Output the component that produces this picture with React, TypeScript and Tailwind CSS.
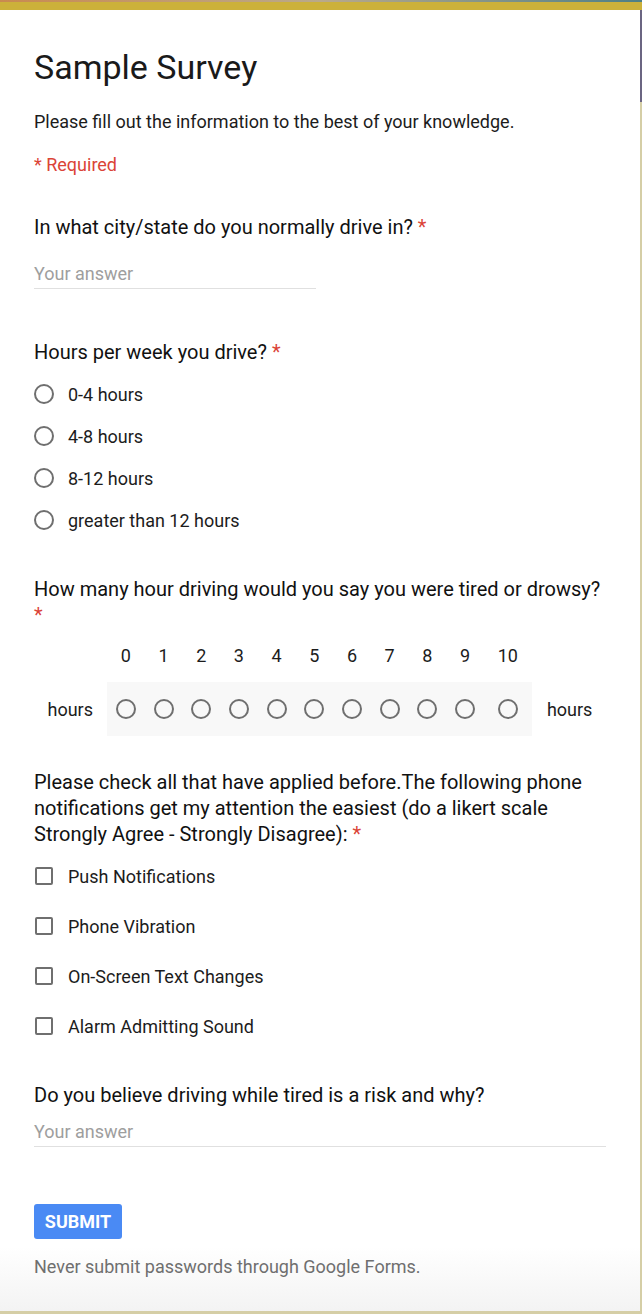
const hours = ["0-4 hours", "4-8 hours", "8-12 hours", "greater than 12 hours"];
const scale = ["0", "1", "2", "3", "4", "5", "6", "7", "8", "9", "10"];
const notify = ["Push Notifications", "Phone Vibration", "On-Screen Text Changes", "Alarm Admitting Sound"];

function Radio() {
  return <span className="block h-[20px] w-[20px] rounded-full border-2 border-[#6f6f6f]" />;
}

function Star() {
  return <span className="text-[#db4437]"> *</span>;
}

function Question({ children, className = "" }: { children: React.ReactNode; className?: string }) {
  return <h2 className={`text-[20px] leading-[26px] text-[#111111] ${className}`}>{children}</h2>;
}

export default function App() {
  return (
    <div className="flex min-h-[1314px] w-[642px] flex-col bg-[#d5cea6] font-['Roboto',sans-serif] text-[#1c1c1c]">
      <div className="h-[2px] bg-gradient-to-r from-[#c98a4f] via-[#b9a98a] to-[#4d7f86]" />
      <div className="h-[8px] bg-[#ccb13a]" />
      <div className="flex">
        <main className="w-[640px] bg-[linear-gradient(to_bottom,#ffffff_calc(100%-64px),#f3f3f3)] px-[34px] pb-[32px] pt-[37px]">
          <h1 className="text-[34px] leading-[40px] text-[#1a1a1a]">Sample Survey</h1>
          <p className="mt-[23px] text-[18px] leading-[24px]">Please fill out the information to the best of your knowledge.</p>
          <p className="mt-[19px] text-[18px] leading-[24px] text-[#db4437]">* Required</p>

          <Question className="mt-[37px]">In what city/state do you normally drive in?<Star /></Question>
          <div className="mt-[22px] w-[282px] border-b border-[#e0e0e0] pb-[2px] text-[18px] leading-[24px] text-[#9e9e9e]">Your answer</div>

          <Question className="mt-[50px]">Hours per week you drive?<Star /></Question>
          <div className="mt-[8px]">
            {hours.map((h) => (
              <div key={h} className="flex h-[42px] items-center">
                <Radio />
                <span className="ml-[14px] text-[18px]">{h}</span>
              </div>
            ))}
          </div>

          <Question className="mt-[35px]">How many hour driving would you say you were tired or drowsy?<Star /></Question>
          <div className="mt-[15px] flex h-[24px] items-center text-[18px]">
            <div className="w-[73px]" />
            {scale.map((n) => (
              <div key={n} className={`${n === "10" ? "w-[48px]" : "w-[37.7px]"} text-center`}>{n}</div>
            ))}
          </div>
          <div className="mt-[15px] flex h-[54px] items-center text-[18px]">
            <div className="w-[73px] pr-[14px] text-right">hours</div>
            <div className="flex h-full items-center bg-[#f8f8f8]">
              {scale.map((n) => (
                <div key={n} className={`${n === "10" ? "w-[48px]" : "w-[37.7px]"} flex justify-center`}>
                  <Radio />
                </div>
              ))}
            </div>
            <div className="pl-[15px]">hours</div>
          </div>

          <Question className="mt-[33px]">
            Please check all that have applied before.The following phone notifications get my attention the easiest (do a likert scale Strongly Agree - Strongly Disagree):<Star />
          </Question>
          <div className="mt-[4px]">
            {notify.map((t) => (
              <div key={t} className="flex h-[50px] items-center">
                <span className="ml-[1px] block h-[18px] w-[18px] rounded-[2px] border-2 border-[#6f6f6f]" />
                <span className="ml-[15px] text-[18px]">{t}</span>
              </div>
            ))}
          </div>

          <Question className="mt-[31px]">Do you believe driving while tired is a risk and why?</Question>
          <div className="mt-[12px] w-[572px] border-b border-[#e0e0e0] pb-[2px] text-[18px] leading-[24px] text-[#9e9e9e]">Your answer</div>

          <button className="mt-[57px] flex h-[35px] w-[88px] items-center justify-center rounded-[3px] bg-[#4a8af4] text-[18px] font-bold text-white">SUBMIT</button>
          <p className="mt-[16px] text-[18px] leading-[24px] text-[#6f6f6f]">Never submit passwords through Google Forms.</p>
        </main>
        <div className="flex w-[2px] flex-col">
          <div className="h-[92px] bg-[#6b6582]" />
          <div className="flex-1 bg-[#d5cea6]" />
        </div>
      </div>
    </div>
  );
}
